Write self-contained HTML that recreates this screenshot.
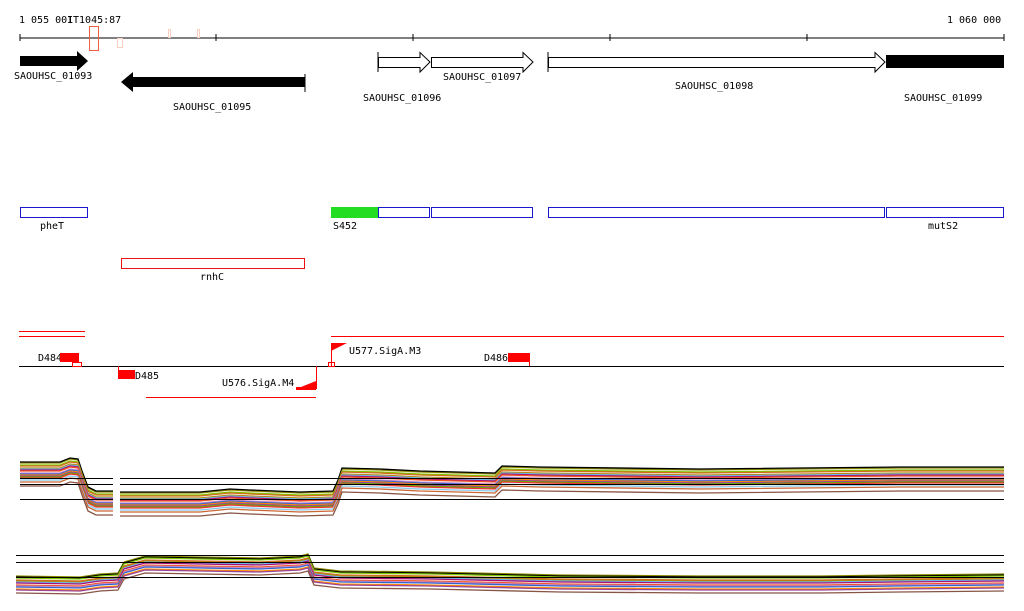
<!DOCTYPE html>
<html><head><meta charset="utf-8"><style>
html,body{margin:0;padding:0;background:#fff;}
svg{display:block;font-family:"DejaVu Sans Mono","Liberation Mono",monospace;font-size:10px;}
</style></head><body>
<svg width="1024" height="611" viewBox="0 0 1024 611" xmlns="http://www.w3.org/2000/svg">
<defs>
<path id="t" fill="none" d="M20 465 L60 465 L70 461 L78 462 L82 474 L88 490 L96 494 L113 494 M120 495 L200 495 L230 492 L250 493 L300 495 L333 494 L338 483 L342 471 L380 472 L420 474 L495 476 L502 469 L540 470 L700 472 L900 470 L1004 470"/>
<path id="b" fill="none" d="M16 579 L80 580 L100 577 L118 576 L124 565 L145 559 L200 560 L260 561 L300 559 L308 557 L314 571 L340 574 L430 575 L560 578 L700 579 L820 579 L900 578 L1004 577"/>
</defs>
<text x="19" y="23">1 055 001</text>
<text x="67" y="23">IT1045:87</text>
<text x="947" y="23">1 060 000</text>
<line x1="20" y1="38" x2="1004" y2="38" stroke="#000"/>
<g stroke="#000"><line x1="20" y1="34" x2="20" y2="41"/><line x1="216" y1="34" x2="216" y2="41"/><line x1="413" y1="34" x2="413" y2="41"/><line x1="610" y1="34" x2="610" y2="41"/><line x1="807" y1="34" x2="807" y2="41"/><line x1="1004" y1="34" x2="1004" y2="41"/></g>
<rect x="89.5" y="26.5" width="9" height="24" fill="none" stroke="#f06040"/>
<rect x="117.5" y="38.5" width="5" height="9" fill="none" stroke="#fbd0c0"/>
<rect x="168.5" y="29.5" width="2" height="8" fill="none" stroke="#fbd0c0"/>
<rect x="197.5" y="29.5" width="2" height="8" fill="none" stroke="#fbd0c0"/>
<polygon points="20,56 77,56 77,51 88,61 77,71 77,66 20,66" fill="#000"/>
<text x="14" y="79">SAOUHSC_01093</text>
<polygon points="305,77 133,77 133,72 121,82 133,92 133,87 305,87" fill="#000"/>
<line x1="305" y1="74" x2="305" y2="92" stroke="#000"/>
<text x="173" y="110">SAOUHSC_01095</text>
<polygon points="378.5,57.5 420,57.5 420,52.5 430,62 420,72 420,67.5 378.5,67.5" fill="#fff" stroke="#000"/>
<line x1="378" y1="52" x2="378" y2="72" stroke="#000"/>
<text x="363" y="101">SAOUHSC_01096</text>
<polygon points="431.5,57.5 523,57.5 523,52.5 533,62 523,72 523,67.5 431.5,67.5" fill="#fff" stroke="#000"/>
<text x="443" y="80">SAOUHSC_01097</text>
<polygon points="548.5,57.5 875,57.5 875,52.5 885,62 875,72 875,67.5 548.5,67.5" fill="#fff" stroke="#000"/>
<line x1="548" y1="52" x2="548" y2="72" stroke="#000"/>
<text x="675" y="89">SAOUHSC_01098</text>
<rect x="886" y="55" width="118" height="13" fill="#000"/>
<text x="904" y="101">SAOUHSC_01099</text>
<g fill="none" stroke="#1a1acc">
<rect x="20.5" y="207.5" width="67" height="10"/>
<rect x="378.5" y="207.5" width="51" height="10"/>
<rect x="431.5" y="207.5" width="101" height="10"/>
<rect x="548.5" y="207.5" width="336" height="10"/>
<rect x="886.5" y="207.5" width="117" height="10"/>
</g>
<rect x="331" y="207" width="47" height="11" fill="#22dd22"/>
<text x="40" y="229">pheT</text>
<text x="333" y="229">S452</text>
<text x="928" y="229">mutS2</text>
<rect x="121.5" y="258.5" width="183" height="10" fill="none" stroke="#ee1111"/>
<text x="200" y="280">rnhC</text>
<g stroke="#f00"><line x1="19" y1="331.5" x2="85" y2="331.5"/><line x1="19" y1="336.5" x2="85" y2="336.5"/><line x1="331" y1="336.5" x2="1004" y2="336.5"/><line x1="146" y1="397.5" x2="316" y2="397.5"/></g>
<line x1="19" y1="366.5" x2="1004" y2="366.5" stroke="#000"/>
<text x="38" y="361">D484</text>
<rect x="60" y="353" width="19" height="9" fill="#f00"/>
<rect x="72.5" y="362.5" width="9" height="4" fill="none" stroke="#f00"/>
<line x1="118.5" y1="366" x2="118.5" y2="372" stroke="#f00"/>
<rect x="118" y="370" width="17" height="9" fill="#f00"/>
<text x="135" y="379">D485</text>
<text x="222" y="386">U576.SigA.M4</text>
<polygon points="296,389 316,381 316,389" fill="#f00"/>
<line x1="316.5" y1="366" x2="316.5" y2="389" stroke="#f00"/>
<rect x="296" y="387" width="20" height="3" fill="#f00"/>
<polygon points="331,343 347,343 331,351" fill="#f00"/>
<line x1="331.5" y1="343" x2="331.5" y2="366" stroke="#f00"/>
<rect x="328.5" y="362.5" width="6" height="4" fill="none" stroke="#f00"/>
<text x="349" y="354">U577.SigA.M3</text>
<text x="484" y="361">D486</text>
<rect x="508" y="353" width="21" height="9" fill="#f00"/>
<line x1="529.5" y1="353" x2="529.5" y2="366" stroke="#f00"/>
<g stroke-width="1.3">
<use href="#t" stroke="#8a8a00" transform="translate(0,-2)"/>
<use href="#t" stroke="#000" transform="translate(0,-3)"/>
<use href="#t" stroke="#7fc800" transform="translate(0,0)"/>
<use href="#t" stroke="#d2691e" transform="translate(0,1)"/>
<use href="#t" stroke="#b8860b" transform="translate(0,3)"/>
<use href="#t" stroke="#66bbee" transform="translate(0,4)"/>
<use href="#t" stroke="#aa1177" transform="translate(0,5)"/>
<use href="#t" stroke="#ee5522" transform="translate(0,6)"/>
<use href="#t" stroke="#cc88cc" transform="translate(0,8)"/>
<use href="#t" stroke="#3366cc" transform="translate(0,9)"/>
<use href="#t" stroke="#ff8800" transform="translate(0,10)"/>
<use href="#t" stroke="#994499" transform="translate(0,11)"/>
<use href="#t" stroke="#66aa00" transform="translate(0,12)"/>
<use href="#t" stroke="#ee3333" transform="translate(0,13)"/>
<use href="#t" stroke="#88ccee" transform="translate(0,15)"/>
<use href="#t" stroke="#cc6633" transform="translate(0,17)"/>
<use href="#t" stroke="#885544" transform="translate(0,21)"/>
</g>
<rect x="113" y="455" width="7" height="60" fill="#fff"/>
<g stroke="#000"><line x1="20" y1="478.5" x2="113" y2="478.5"/><line x1="120" y1="478.5" x2="1004" y2="478.5"/><line x1="20" y1="484.5" x2="113" y2="484.5"/><line x1="120" y1="484.5" x2="1004" y2="484.5"/><line x1="20" y1="499.5" x2="113" y2="499.5"/><line x1="120" y1="499.5" x2="1004" y2="499.5"/></g>
<g stroke-width="1.3">
<use href="#b" stroke="#8a8a00" transform="translate(0,-3)"/>
<use href="#b" stroke="#000" transform="translate(0,-2)"/>
<use href="#b" stroke="#7fc800" transform="translate(0,-1)"/>
<use href="#b" stroke="#d2691e" transform="translate(0,1)"/>
<use href="#b" stroke="#b8860b" transform="translate(0,2)"/>
<use href="#b" stroke="#66bbee" transform="translate(0,3)"/>
<use href="#b" stroke="#aa1177" transform="translate(0,4)"/>
<use href="#b" stroke="#ee5522" transform="translate(0,6)"/>
<use href="#b" stroke="#cc88cc" transform="translate(0,7)"/>
<use href="#b" stroke="#3366cc" transform="translate(0,8)"/>
<use href="#b" stroke="#ff8800" transform="translate(0,10)"/>
<use href="#b" stroke="#994499" transform="translate(0,11)"/>
<use href="#b" stroke="#885544" transform="translate(0,14)"/>
</g>
<g stroke="#000"><line x1="16" y1="555.5" x2="1004" y2="555.5"/><line x1="16" y1="562.5" x2="1004" y2="562.5"/><line x1="16" y1="577.5" x2="1004" y2="577.5"/></g>
</svg>
</body></html>
